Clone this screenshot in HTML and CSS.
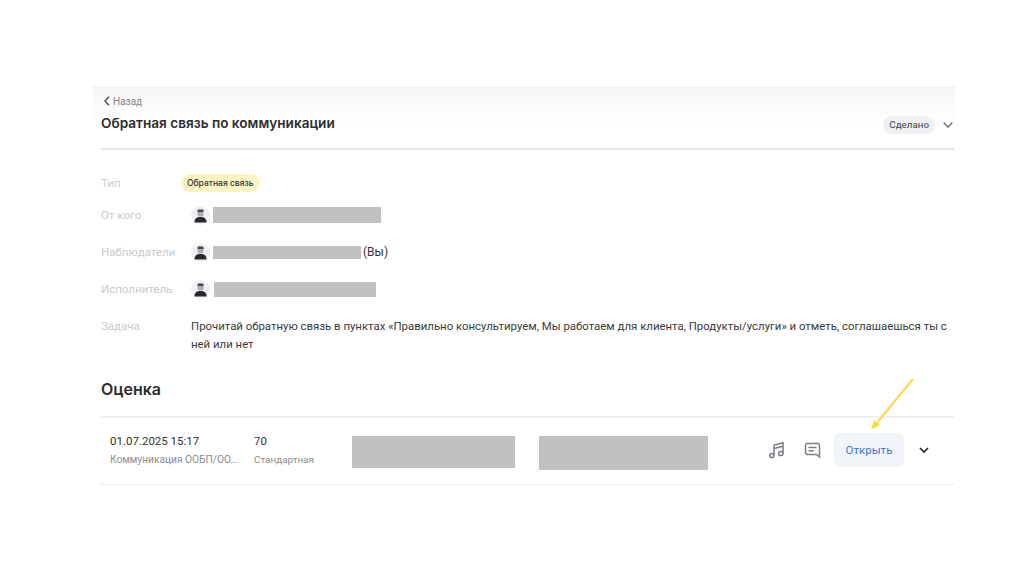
FILE: index.html
```html
<!DOCTYPE html>
<html lang="ru">
<head>
  <meta charset="UTF-8">
  <title>Обратная связь по коммуникации</title>
  <link rel="stylesheet" href="styles.css">
</head>
<body>

  <svg class="defs" width="0" height="0">
    <symbol id="userpic" viewBox="0 0 19 19">
      <circle cx="9.5" cy="9.5" r="9.5" fill="#eef0f3"/>
      <rect x="6.5" y="3.5" width="6" height="7" rx="2" fill="#a9acb0"/>
      <path d="M6.500 6V4.500a1 1 0 0 1 1-1h4a1 1 0 0 1 1 1V6z" fill="#4a4c50"/>
      <path d="M3.500 16.500c0-4 2-5.500 6-5.500s6 1.500 6 5.500z" fill="#26282b"/>
    </symbol>
  </svg>

  <div class="panel">
    <div class="back">
      <svg width="8" height="10" viewBox="0 0 8 10"><path d="M6 .8 2 5l4 4.200" fill="none" stroke="#555" stroke-width="1.500"/></svg>
      Назад
    </div>

    <div class="head">
      <h1>Обратная связь по коммуникации</h1>
      <div class="status">
        <span class="status-pill">Сделано</span>
        <svg width="10" height="6" viewBox="0 0 10 6"><path d="M.7.7 5 5l4.300-4.300" fill="none" stroke="#666" stroke-width="1.300"/></svg>
      </div>
    </div>

    <div class="row row-type">
      <div class="label label-type">Тип</div>
      <span class="badge">Обратная связь</span>
    </div>
    <div class="row row-from">
      <div class="label">От кого</div>
      <svg class="avatar" width="19" height="19"><use href="#userpic"/></svg>
      <div class="hidden-name name-from"></div>
    </div>
    <div class="row row-watch">
      <div class="label">Наблюдатели</div>
      <svg class="avatar" width="19" height="19"><use href="#userpic"/></svg>
      <div class="hidden-name name-watch"></div>
      <span class="you">(Вы)</span>
    </div>
    <div class="row row-exec">
      <div class="label">Исполнитель</div>
      <svg class="avatar" width="19" height="19"><use href="#userpic"/></svg>
      <div class="hidden-name name-exec"></div>
    </div>
    <div class="row row-task">
      <div class="label">Задача</div>
      <div class="task-text">Прочитай обратную связь в пунктах «Правильно консультируем, Мы работаем для клиента, Продукты/услуги» и отметь, соглашаешься ты с ней или нет</div>
    </div>

    <h2>Оценка</h2>

    <div class="score">
      <div class="score-date">
        <div class="score-main">01.07.2025 15:17</div>
        <div class="score-sub">Коммуникация ООБП/ОО...</div>
      </div>
      <div class="score-value">
        <div class="score-main">70</div>
        <div class="score-sub">Стандартная</div>
      </div>
      <div class="hidden-block block-one"></div>
      <div class="hidden-block block-two"></div>
      <div class="score-actions">
        <svg width="18" height="18" viewBox="0 0 18 18" fill="none" stroke="#7b7f85" stroke-width="1.500"><path d="M6 14.500V4l9-2.300v10.800"/><path d="M6 7.500l9-2.300"/><circle cx="3.800" cy="14.500" r="2.100"/><circle cx="12.800" cy="12.500" r="2.100"/></svg>
        <svg class="icon-chat" width="17" height="17" viewBox="0 0 17 17" fill="none" stroke="#7b7f85" stroke-width="1.500"><path d="M3 1.500h11a1.500 1.500 0 0 1 1.500 1.500v12l-3-2.500H3A1.500 1.500 0 0 1 1.500 11V3A1.500 1.500 0 0 1 3 1.500z"/><path d="M4.500 5.500h8M4.500 8.800h5.500"/></svg>
        <button class="open-btn">Открыть</button>
        <svg class="icon-more" width="10" height="7" viewBox="0 0 10 7"><path d="M1 1l4 4 4-4" fill="none" stroke="#222" stroke-width="1.600"/></svg>
      </div>
    </div>
  </div>

  <svg class="arrow" width="50" height="60" viewBox="0 0 50 60"><path d="M46 2 9 47" fill="none" stroke="#f5dc4c" stroke-width="2"/><path d="M4 53l3-10 6 5z" fill="#f5dc4c"/></svg>

</body>
</html>
```

FILE: styles.css
```css
body {
  margin: 0;
  height: 574px;
  overflow: hidden;
  background: #fff;
  font-family: Roboto, "Liberation Sans", sans-serif;
  color: #333;
  position: relative;
}

.defs {
  position: absolute;
}

.panel {
  margin: 86px 69px 0 93px;
  padding: 0 1px 0 8px;
  background: linear-gradient(#f5f5f5, #fff 38px);
}

.back {
  display: flex;
  align-items: center;
  gap: 2px;
  height: 16px;
  padding: 7px 0 1px 2px;
  font-size: 10px;
  color: #85878a;
}

h1 {
  margin: 0;
  font-family: Inter, sans-serif;
  font-size: 13.6px;
  font-weight: 600;
  line-height: 20px;
  color: #2c2d2e;
}

.head {
  display: flex;
  justify-content: space-between;
  height: 35px;
  padding-top: 3px;
  border-bottom: 2px solid #e4e4e4;
}

.status {
  display: flex;
  align-items: center;
  gap: 8px;
  height: 20px;
  margin-top: 2px;
  padding-right: 1px;
}

.status-pill {
  padding: 2px 6px;
  background: #eef0f3;
  border-radius: 9px;
  font-size: 9.8px;
  line-height: 14px;
  color: #444;
}

.row {
  display: flex;
  align-items: center;
  height: 20px;
  font-size: 12px;
}

.row-type { margin-top: 23px; }
.row-from { margin-top: 12px; }
.row-watch { margin-top: 17px; }
.row-exec { margin-top: 17px; }

.label {
  flex: none;
  width: 90px;
  color: #c8cacc;
  font-size: 11.5px;
  line-height: 18px;
}

.label-type { width: 80px; }

.badge {
  padding: 2px 6px;
  background: #fdf4c4;
  border-radius: 9px;
  font-family: Inter, sans-serif;
  font-size: 8.5px;
  font-weight: 500;
  line-height: 14px;
  color: #333;
}

.avatar { flex: none; }

.hidden-name {
  height: 16px;
  background: #c1c1c1;
  margin-left: 3px;
}

.name-from { width: 168px; }
.name-watch { width: 148px; height: 13px; }
.name-exec { width: 162px; height: 15px; margin-left: 4px; }

.you {
  margin-left: 2px;
  color: #333;
}

.row-task {
  align-items: flex-start;
  height: auto;
  margin-top: 18px;
}

.task-text {
  font-size: 11.4px;
  line-height: 18px;
  color: #3a3a3a;
}

h2 {
  margin: 23px 0 0;
  font-family: Inter, sans-serif;
  font-size: 16px;
  font-weight: 600;
  line-height: 26px;
  color: #2c2d2e;
}

.score {
  display: flex;
  align-items: center;
  height: 64px;
  margin-top: 14px;
  padding-bottom: 2px;
  border-top: 2px solid #f1f1f1;
  border-bottom: 1px solid #ececec;
}

.score-date {
  width: 143px;
  padding: 0 0 2px 9px;
}

.score-value {
  width: 98px;
  padding: 0 0 2px 1px;
}

.score-main {
  font-size: 11.5px;
  line-height: 16px;
  color: #333;
}

.score-sub {
  margin-top: 4px;
  font-size: 10.2px;
  line-height: 13px;
  color: #8a8c8f;
  white-space: nowrap;
}

.score-value .score-sub { font-size: 9.9px; }

.hidden-block {
  align-self: flex-start;
  margin-top: 18px;
  background: #c1c1c1;
}

.block-one { width: 163px; height: 32px; }
.block-two { width: 169px; height: 34px; margin-left: 24px; }

.score-actions {
  display: flex;
  align-items: center;
  margin-left: auto;
  padding-right: 25px;
}

.icon-chat { margin-left: 18px; }

.open-btn {
  width: 70px;
  height: 34px;
  margin-left: 13px;
  border: 0;
  border-radius: 6px;
  background: #f1f4f8;
  font-family: Roboto, sans-serif;
  font-size: 11.5px;
  color: #3c74c9;
}

.icon-more { margin-left: 15px; }

.arrow {
  position: absolute;
  left: 867px;
  top: 377px;
}
```
